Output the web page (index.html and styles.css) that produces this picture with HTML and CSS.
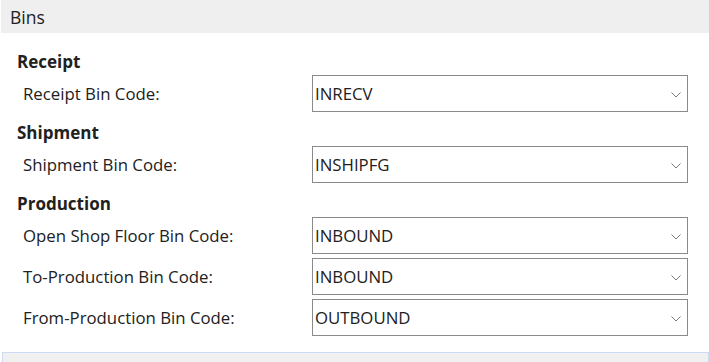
FILE: index.html
```html
<!DOCTYPE html>
<html lang="en">
<head>
    <meta charset="UTF-8">
    <title>Bins</title>
    <link rel="stylesheet" href="styles.css">
</head>
<body>
    <div class="section-header">Bins</div>

    <div class="form-body">
        <div class="group">
            <div class="group-title">Receipt</div>
            <div class="field-row">
                <label class="field-label">Receipt Bin Code:</label>
                <div class="field-box">
                    <span class="field-value">INRECV</span>
                    <svg class="chevron" width="10" height="6" viewBox="0 0 10 6"><polyline points="0.5,0.5 5,5 9.5,0.5" fill="none" stroke="#7a7a7a" stroke-width="1"/></svg>
                </div>
            </div>
        </div>

        <div class="group">
            <div class="group-title">Shipment</div>
            <div class="field-row">
                <label class="field-label">Shipment Bin Code:</label>
                <div class="field-box">
                    <span class="field-value">INSHIPFG</span>
                    <svg class="chevron" width="10" height="6" viewBox="0 0 10 6"><polyline points="0.5,0.5 5,5 9.5,0.5" fill="none" stroke="#7a7a7a" stroke-width="1"/></svg>
                </div>
            </div>
        </div>

        <div class="group">
            <div class="group-title">Production</div>
            <div class="field-row">
                <label class="field-label">Open Shop Floor Bin Code:</label>
                <div class="field-box">
                    <span class="field-value">INBOUND</span>
                    <svg class="chevron" width="10" height="6" viewBox="0 0 10 6"><polyline points="0.5,0.5 5,5 9.5,0.5" fill="none" stroke="#7a7a7a" stroke-width="1"/></svg>
                </div>
            </div>
            <div class="field-row">
                <label class="field-label">To-Production Bin Code:</label>
                <div class="field-box">
                    <span class="field-value">INBOUND</span>
                    <svg class="chevron" width="10" height="6" viewBox="0 0 10 6"><polyline points="0.5,0.5 5,5 9.5,0.5" fill="none" stroke="#7a7a7a" stroke-width="1"/></svg>
                </div>
            </div>
            <div class="field-row">
                <label class="field-label">From-Production Bin Code:</label>
                <div class="field-box">
                    <span class="field-value">OUTBOUND</span>
                    <svg class="chevron" width="10" height="6" viewBox="0 0 10 6"><polyline points="0.5,0.5 5,5 9.5,0.5" fill="none" stroke="#7a7a7a" stroke-width="1"/></svg>
                </div>
            </div>
        </div>
    </div>

    <div class="next-section"></div>
</body>
</html>
```

FILE: styles.css
```css
* {
    margin: 0;
    padding: 0;
    box-sizing: border-box;
}

body {
    font-family: 'Open Sans', 'Noto Sans', sans-serif;
    color: #212121;
    background-color: #ffffff;
    width: 709px;
    height: 362px;
    overflow: hidden;
}

.section-header {
    height: 33px;
    margin-left: 1px;
    padding-left: 9px;
    background-color: #efefef;
    font-size: 17.5px;
    line-height: 35px;
}

.form-body {
    padding: 18px 21px 0 17px;
}

.group {
    margin-bottom: 10px;
}

.group:last-child {
    margin-bottom: 0;
}

.group-title {
    font-size: 17px;
    font-weight: 700;
    line-height: 22px;
    margin-bottom: 2px;
}

.field-row {
    display: flex;
    align-items: center;
    margin-bottom: 4px;
}

.field-row:last-child {
    margin-bottom: 0;
}

.field-label {
    width: 295px;
    padding-left: 6px;
    font-size: 16.8px;
}

.field-box {
    flex: 1;
    height: 37px;
    border: 1px solid #8a8a8a;
    display: flex;
    align-items: center;
    justify-content: space-between;
    padding: 0 6px 0 2px;
}

.field-value {
    font-size: 16.8px;
}

.chevron {
    display: block;
    margin-top: 2px;
}

.next-section {
    margin: 16px 0 0 2px;
    height: 40px;
    background-color: #f0f0f0;
    border: 1px solid #c9dcf4;
}
```
